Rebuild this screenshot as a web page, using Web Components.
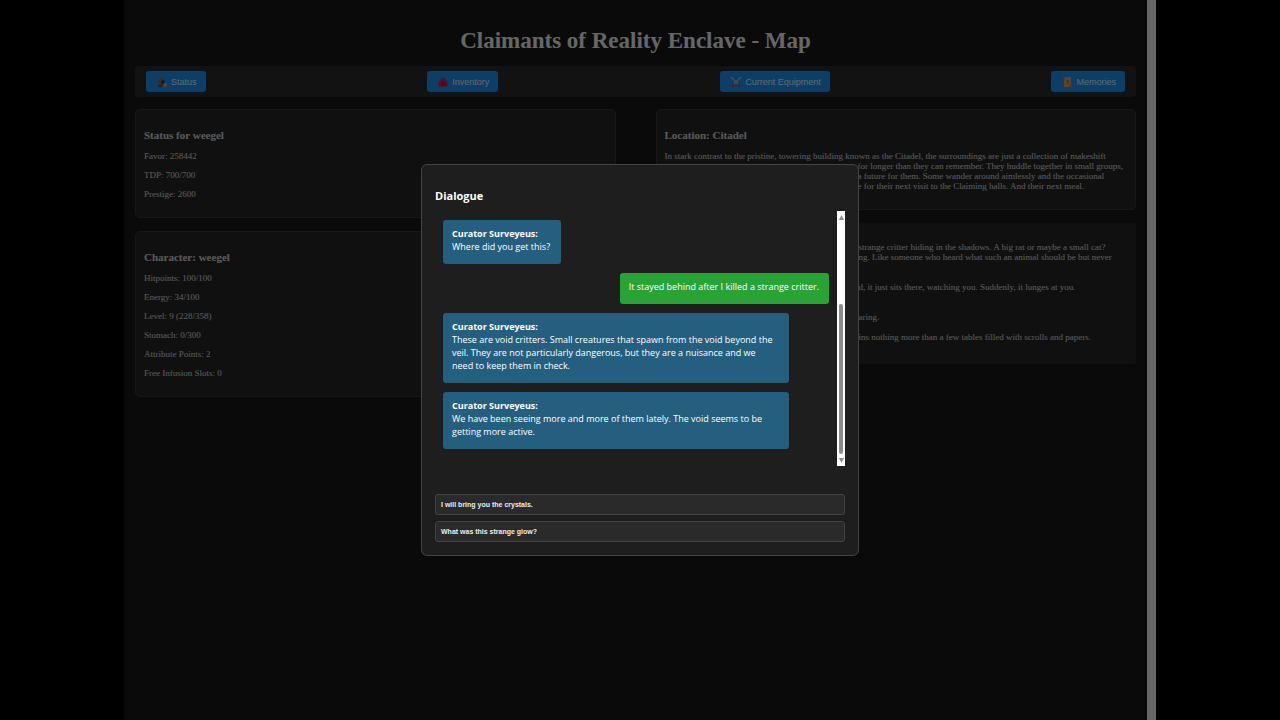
<!DOCTYPE html>
<html lang="en">
<head>
<meta charset="utf-8">
<title>Claimants of Reality Enclave - Map</title>
<style>
  body { margin: 0; background: #000; font-family: "Liberation Serif", "Times New Roman", serif; }
</style>
</head>
<body>
<game-shell>
  <h1 slot="title">Claimants of Reality Enclave - Map</h1>
  <nav-bar slot="nav">
    <nav-button icon="status">Status</nav-button>
    <nav-button icon="bag">Inventory</nav-button>
    <nav-button icon="swords">Current Equipment</nav-button>
    <nav-button icon="scroll">Memories</nav-button>
  </nav-bar>

  <info-card slot="left" heading="Status for weegel">
    <p>Favor: 258442</p>
    <p>TDP: 700/700</p>
    <p>Prestige: 2600</p>
  </info-card>
  <info-card slot="left" heading="Character: weegel">
    <p>Hitpoints: 100/100</p>
    <p>Energy: 34/100</p>
    <p>Level: 9 (228/358)</p>
    <p>Stomach: 0/300</p>
    <p>Attribute Points: 2</p>
    <p>Free Infusion Slots: 0</p>
  </info-card>

  <info-card slot="right" heading="Location: Citadel">
    <div>In stark contrast to the pristine, towering building known as the Citadel, the surroundings are just a collection of makeshift</div>
    <div class="aside">for longer than they can remember. They huddle together in small groups,<br>a future for them. Some wander around aimlessly and the occasional<br>e for their next visit to the Claiming halls. And their next meal.</div>
  </info-card>
  <story-log slot="right">
    <p class="long">strange critter hiding in the shadows. A big rat or maybe a small cat?<br>ng. Like someone who heard what such an animal should be but never</p>
    <p class="long">d, it just sits there, watching you. Suddenly, it lunges at you.</p>
    <p>aring.</p>
    <p>ins nothing more than a few tables filled with scrolls and papers.</p>
  </story-log>

  <dialogue-window slot="dialog" heading="Dialogue">
    <chat-bubble speaker="Curator Surveyeus:">Where did you get this?</chat-bubble>
    <chat-bubble mine>It stayed behind after I killed a strange critter.</chat-bubble>
    <chat-bubble speaker="Curator Surveyeus:">These are void critters. Small creatures that spawn from the void beyond the veil. They are not particularly dangerous, but they are a nuisance and we need to keep them in check.</chat-bubble>
    <chat-bubble speaker="Curator Surveyeus:">We have been seeing more and more of them lately. The void seems to be getting more active.</chat-bubble>
    <dialogue-option slot="options">I will bring you the crystals.</dialogue-option>
    <dialogue-option slot="options">What was this strange glow?</dialogue-option>
  </dialogue-window>
</game-shell>

<script>
  function define(name, render) {
    customElements.define(name, class extends HTMLElement {
      constructor() {
        super();
        this.attachShadow({ mode: 'open' });
      }
      connectedCallback() {
        const template = document.createElement('template');
        template.innerHTML = render(this);
        this.shadowRoot.replaceChildren(template.content.cloneNode(true));
      }
    });
  }

  const icons = {
    status: '<path d="M2 6 Q3 1 6 2 Q9 3 8 6 L7 9 H3 Z" fill="#b8612c"/><path d="M5 5 L8 4 L9 8 L6 9 Z" fill="#2c3a44"/><circle cx="9" cy="9" r="2" fill="#c9a878"/><path d="M2 9 H6 V11 H3 Z" fill="#5a4a30"/>',
    bag: '<path d="M4 4 V3 Q6 1 8 3 V4" fill="none" stroke="#c3193e" stroke-width="1"/><path d="M2 5 Q6 2 10 5 L11 10 Q6 12 1 10 Z" fill="#e81b4a"/><path d="M4 7 H8 V9 H4 Z" fill="#b3123a"/>',
    swords: '<path d="M1 1 L9 9 M11 1 L3 9" stroke="#b9c2c9" stroke-width="1.4" fill="none"/><path d="M2 7 L5 10 M10 7 L7 10" stroke="#c5543c" stroke-width="1.4"/><path d="M2 11 L4 9 M10 11 L8 9" stroke="#9c4a3a" stroke-width="1.4"/>',
    scroll: '<path d="M3 1 H10 V11 H3 Z" fill="#f0a850"/><path d="M2 1 H4 V3 H2 Z M8 9 H11 V11 H8 Z" fill="#c98a4a"/><path d="M5 5 H8 M6 7 H8" stroke="#9d6a36" stroke-width="1"/>'
  };

  define('game-shell', () => `
    <style>
      :host { display: flex; min-height: 100vh; box-sizing: border-box; padding: 0 124px; background: #000; color: #e0e0e0; }
      .view { flex: 1; display: flex; position: relative; }
      main { flex: 1; min-width: 0; padding: 28px 11px; background: #1a1a1a; }
      ::slotted(h1) { margin: 0 0 12px; font-size: 23px; line-height: 26px; text-align: center; color: #fff; }
      .columns { display: grid; grid-template-columns: 1fr 1fr; gap: 40px; margin-top: 12px; }
      .column { display: flex; flex-direction: column; gap: 13px; min-width: 0; }
      .track { width: 9px; background: #fff; }
      .overlay { position: absolute; inset: 0; display: grid; place-items: center; background: rgba(0, 0, 0, .6); }
    </style>
    <div class="view">
      <main>
        <slot name="title"></slot>
        <slot name="nav"></slot>
        <div class="columns">
          <div class="column"><slot name="left"></slot></div>
          <div class="column"><slot name="right"></slot></div>
        </div>
      </main>
      <div class="track"></div>
      <div class="overlay"><slot name="dialog"></slot></div>
    </div>`);

  define('nav-bar', () => `
    <style>
      :host { display: block; }
      nav { display: flex; justify-content: space-between; padding: 5px 11px; background: #2e2e2e; border-radius: 4px; }
    </style>
    <nav><slot></slot></nav>`);

  define('nav-button', el => `
    <style>
      :host { display: block; }
      button { display: flex; align-items: center; gap: 3px; height: 21px; padding: 0 9px 0 10px; border: 0; border-radius: 3px;
        background: #1f9cff; color: #fff; font: 9px "Liberation Sans", Arial, sans-serif; }
      svg { width: 12px; height: 12px; }
    </style>
    <button type="button"><svg viewBox="0 0 12 12" aria-hidden="true">${icons[el.getAttribute('icon')]}</svg><span><slot></slot></span></button>`);

  define('info-card', el => `
    <style>
      :host { display: block; padding: 18px 8px; border: 1px solid #3a3a3a; border-radius: 5px; background: #2a2a2a;
        font-size: 9px; line-height: 10px; }
      h3 { margin: 0 0 9px; font-size: 11px; line-height: 14px; }
      ::slotted(p) { margin: 0; }
      ::slotted(p:not(:last-child)) { margin-bottom: 9px; }
      ::slotted(.aside) { padding-left: 193px; white-space: nowrap; }
    </style>
    <h3>${el.getAttribute('heading')}</h3>
    <slot></slot>`);

  define('story-log', () => `
    <style>
      :host { display: flex; flex-direction: column; gap: 10px; padding: 19px 9px 22px 203px; border-radius: 3px; background: #2a2a2a;
        font-size: 9px; line-height: 10px; white-space: nowrap; }
      ::slotted(p) { margin: 0; }
      ::slotted(p.long) { margin-bottom: 10px; }
    </style>
    <slot></slot>`);

  define('dialogue-window', el => `
    <style>
      :host { display: block; box-sizing: border-box; width: 438px; max-width: 100%; padding: 13px; border: 1px solid #444;
        border-radius: 6px; background: #1e1e1e; color: #fff; font-family: "Open Sans", "Noto Sans", sans-serif; }
      h3 { margin: 10px 0 7px; font-size: 11px; line-height: 16px; }
      .history { display: flex; }
      .messages { flex: 1; display: flex; flex-direction: column; gap: 9px; padding: 9px 8px 17px; }
      .scrollbar { width: 8px; display: flex; flex-direction: column; align-items: center; background: #fff; }
      .scrollbar svg { width: 7px; height: 12px; fill: #8b8b8b; }
      .rail { flex: 1; display: flex; align-items: flex-end; }
      .thumb { width: 4px; height: 65%; border-radius: 2px; background: #8b8b8b; }
      .options { display: flex; flex-direction: column; gap: 6px; margin-top: 28px; }
    </style>
    <h3>${el.getAttribute('heading')}</h3>
    <div class="history">
      <div class="messages"><slot></slot></div>
      <div class="scrollbar">
        <svg viewBox="0 0 7 12" aria-hidden="true"><path d="M3.5 4 L6 9 H1 Z"/></svg>
        <div class="rail"><div class="thumb"></div></div>
        <svg viewBox="0 0 7 12" aria-hidden="true"><path d="M3.5 9 L6 4 H1 Z"/></svg>
      </div>
    </div>
    <div class="options"><slot name="options"></slot></div>`);

  define('chat-bubble', el => `
    <style>
      :host { display: block; box-sizing: border-box; align-self: flex-start; max-width: 346px; padding: 7px 10px 11px 9px; border-radius: 3px;
        background: #255f80; font-size: 9px; line-height: 13px; }
      :host(:not([mine])) { padding-right: 11px; }
      :host([mine]) { align-self: flex-end; background: #2aa336; }
      strong { display: block; }
    </style>
    ${el.hasAttribute('speaker') ? `<strong>${el.getAttribute('speaker')}</strong>` : ''}<slot></slot>`);

  define('dialogue-option', () => `
    <style>
      :host { display: block; }
      button { display: block; box-sizing: border-box; width: 100%; height: 21px; padding: 0 5px; border: 1px solid #444; border-radius: 3px;
        background: #2a2a2a; color: #eee; text-align: left; font: bold 7px "Liberation Sans", Arial, sans-serif; }
    </style>
    <button type="button"><slot></slot></button>`);
</script>
</body>
</html>
